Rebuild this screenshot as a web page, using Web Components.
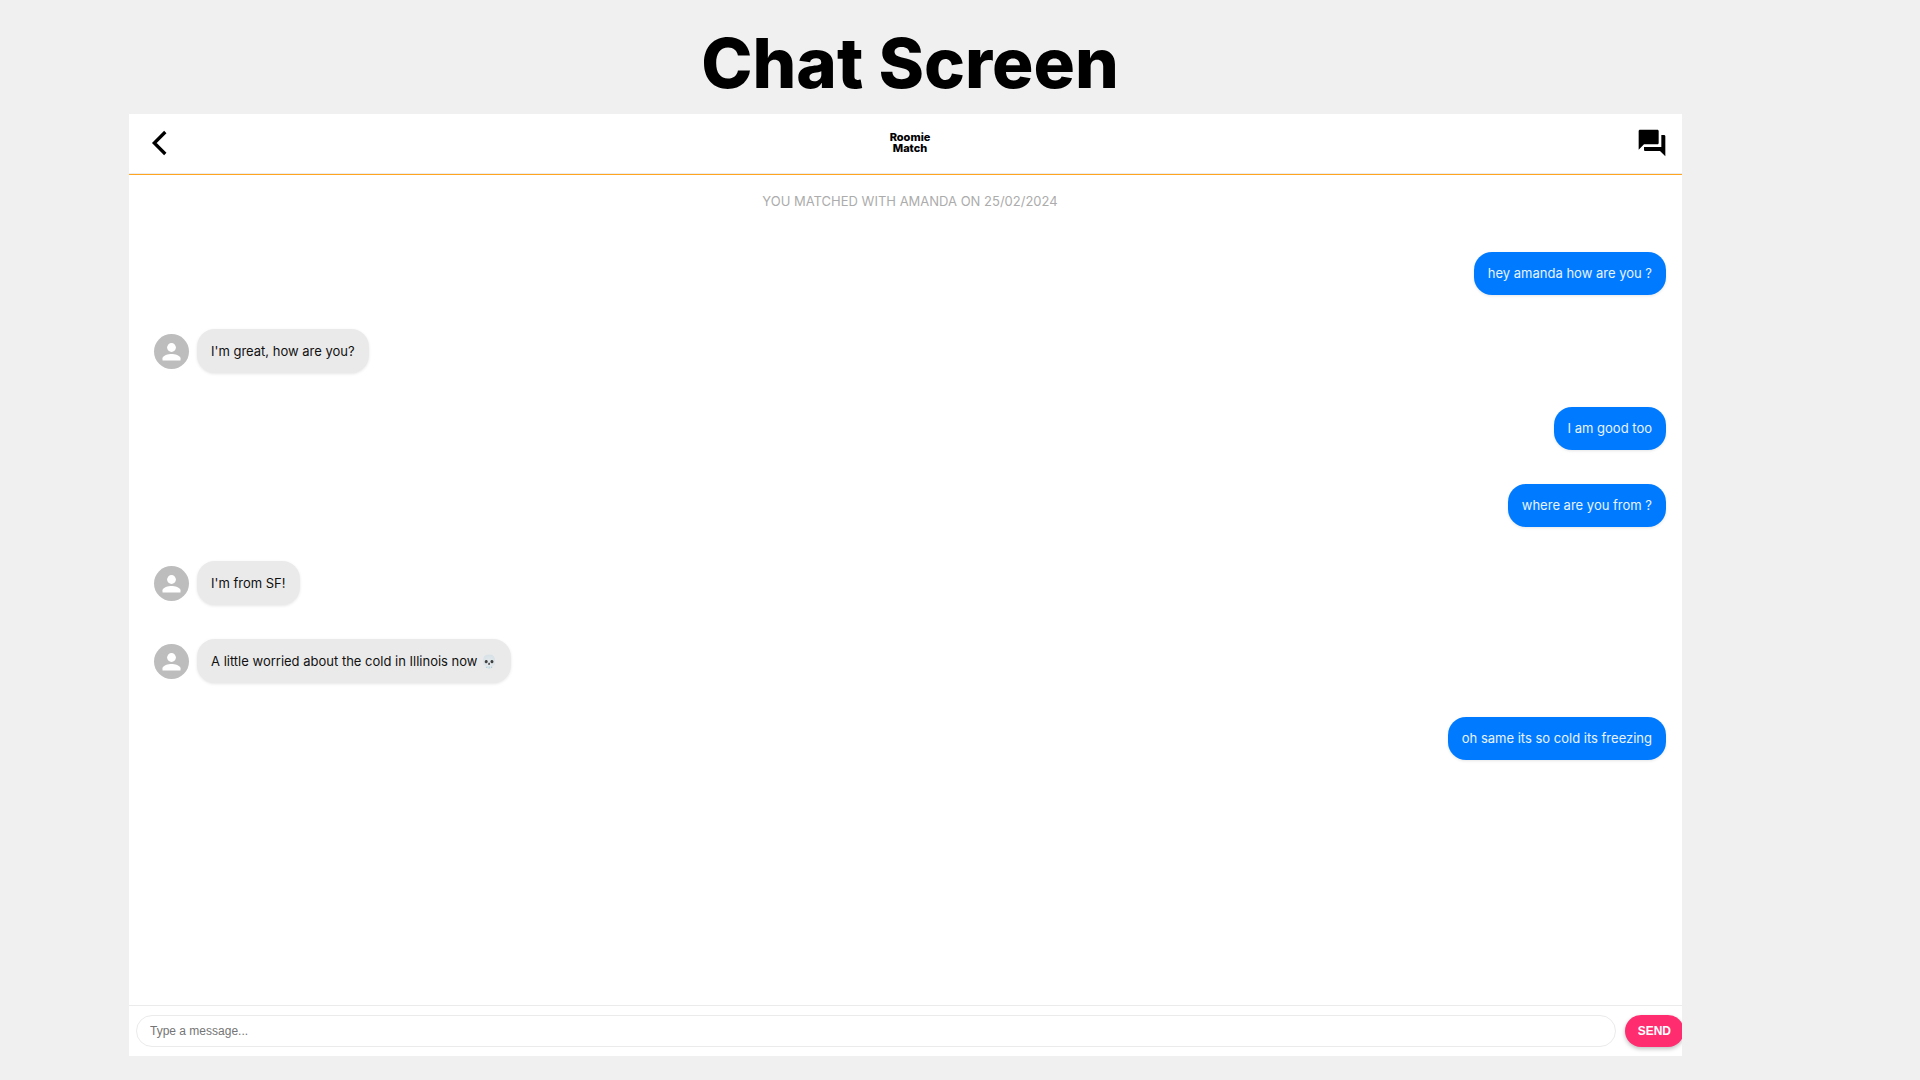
<!DOCTYPE html>
<html lang="en">
<head>
<meta charset="utf-8">
<meta name="viewport" content="width=device-width, initial-scale=1">
<title>Roomie Match</title>
<style>
  body {
    margin: 0;
    background: #f0f0f0;
    font-family: Inter, "Liberation Sans", sans-serif;
  }
</style>
</head>
<body>

<chat-page>
  <span slot="title">Chat Screen</span>
  <chat-header slot="header">Roomie<br>Match</chat-header>
  <chat-log slot="log">
    <span slot="notice">YOU MATCHED WITH AMANDA ON 25/02/2024</span>
    <chat-message sent>hey amanda how are you ?</chat-message>
    <chat-message>I'm great, how are you?</chat-message>
    <chat-message sent>I am good too</chat-message>
    <chat-message sent>where are you from ?</chat-message>
    <chat-message>I'm from SF!</chat-message>
    <chat-message>A little worried about the cold in Illinois now 💀</chat-message>
    <chat-message sent>oh same its so cold its freezing</chat-message>
  </chat-log>
  <chat-composer slot="composer" placeholder="Type a message..."></chat-composer>
</chat-page>

<script>
class ChatPage extends HTMLElement {
  constructor() {
    super();

    let shadowRoot = this.attachShadow({mode: 'open'});
    shadowRoot.innerHTML = `
      <style>

        :host {
          --bleed: 9px;
          display: flex;
          flex-direction: column;
          box-sizing: border-box;
          min-height: 100vh;
          padding: 23px 238px 24px 129px;
        }

        h1 {
          margin: 0 calc(-1 * var(--bleed)) 11px 0;
          font-size: 69px;
          font-weight: 800;
          line-height: 80px;
          text-align: center;
          color: #000;
        }

        /* the app is a little wider than its frame, which cuts it off */
        .frame {
          display: flex;
          flex: 1;
          overflow: hidden;
          background: #fff;
        }

        .app {
          display: flex;
          flex: 1;
          flex-direction: column;
          margin-right: calc(-1 * var(--bleed));
        }

        ::slotted(chat-log) {
          flex: 1;
        }

      </style>

      <h1><slot name="title"></slot></h1>
      <main class="frame">
        <div class="app">
          <slot name="header"></slot>
          <slot name="log"></slot>
          <slot name="composer"></slot>
        </div>
      </main>
    `;
  }
}

class ChatHeader extends HTMLElement {
  constructor() {
    super();

    let shadowRoot = this.attachShadow({mode: 'open'});
    shadowRoot.innerHTML = `
      <style>

        :host {
          display: block;
          border-bottom: 1px solid #ffa51f;
        }

        header {
          display: flex;
          align-items: center;
          justify-content: space-between;
          height: 57px;
          padding: 0 15px 2px;
          border-bottom: 1px solid #ececec;
        }

        button {
          display: flex;
          align-items: center;
          width: 40px;
          height: 32px;
          margin: 0;
          padding: 0;
          border: 0;
          background: none;
        }

        .name {
          font-size: 11px;
          font-weight: 800;
          line-height: 11px;
          text-align: center;
        }

      </style>

      <header>
        <button type="button" aria-label="Back">
          <svg width="32" height="32" viewBox="0 0 32 32" fill="none" stroke="#000" stroke-width="3.3">
            <path d="M21.3 5L10.3 16l11 11"/>
          </svg>
        </button>
        <div class="name"><slot></slot></div>
        <button type="button" aria-label="Chats">
          <svg width="32" height="32" viewBox="0 0 24 24">
            <path d="M21 6h-2v9H6v2c0 .55.45 1 1 1h11l4 4V7c0-.55-.45-1-1-1zm-4 6V3c0-.55-.45-1-1-1H3c-.55 0-1 .45-1 1v14l4-4h10c.55 0 1-.45 1-1z"/>
          </svg>
        </button>
      </header>
    `;
  }
}

class ChatLog extends HTMLElement {
  constructor() {
    super();

    let shadowRoot = this.attachShadow({mode: 'open'});
    shadowRoot.innerHTML = `
      <style>

        :host {
          display: block;
        }

        p {
          margin: 0;
          padding: 17px 0 42px;
          font-size: 13px;
          line-height: 18px;
          text-align: center;
          color: #acacac;
        }

        .messages {
          display: flex;
          flex-direction: column;
          gap: 34px;
          padding: 0 25px;
        }

      </style>

      <p><slot name="notice"></slot></p>
      <div class="messages"><slot></slot></div>
    `;
  }
}

class ChatMessage extends HTMLElement {
  constructor() {
    super();

    let shadowRoot = this.attachShadow({mode: 'open'});
    shadowRoot.innerHTML = `
      <style>

        :host {
          display: flex;
          align-items: center;
          gap: 8px;
        }

        :host([sent]) {
          justify-content: flex-end;
        }

        :host([sent]) svg {
          display: none;
        }

        svg {
          flex: none;
          border-radius: 50%;
          background: #bdbdbd;
        }

        .bubble {
          padding: 13px 14px;
          border-radius: 18px;
          background: #eaeaea;
          box-shadow: 0 1px 3px rgba(0, 0, 0, 0.1);
          font-size: 13px;
          line-height: 18px;
          color: #111;
        }

        :host([sent]) .bubble {
          background: #007bff;
          line-height: 17px;
          color: #e9f3ff;
        }

      </style>

      <svg width="35" height="35" viewBox="0 0 35 35" fill="#fff" aria-hidden="true">
        <circle cx="17.5" cy="13.5" r="4.4"/>
        <path d="M8.5 26.5v-2.2c0-3 6-4.400 9-4.400s9 1.400 9 4.400v2.200z"/>
      </svg>
      <div class="bubble"><slot></slot></div>
    `;
  }
}

class ChatComposer extends HTMLElement {
  // Monitor the 'placeholder' attribute for changes.
  static get observedAttributes() {
    return ['placeholder'];
  }

  constructor() {
    super();

    let shadowRoot = this.attachShadow({mode: 'open'});
    shadowRoot.innerHTML = `
      <style>

        :host {
          display: block;
          border-top: 1px solid #ebebeb;
          font-family: "Liberation Sans", Arial, sans-serif;
        }

        form {
          display: flex;
          align-items: center;
          gap: 9px;
          padding: 9px 7px;
        }

        input,
        button {
          box-sizing: border-box;
          height: 32px;
          margin: 0;
          border-radius: 16px;
          font-family: inherit;
          font-size: 12px;
        }

        input {
          flex: 1;
          min-width: 0;
          padding: 0 13px;
          border: 1px solid #ebebeb;
          background: #fff;
          outline: none;
        }

        input::placeholder {
          color: #757575;
        }

        button {
          padding: 0 13px;
          border: 0;
          background: #ff2d6f;
          box-shadow: 0 2px 4px rgba(0, 0, 0, 0.25);
          font-weight: bold;
          color: #fff;
        }

      </style>

      <form>
        <input type="text" aria-label="Message">
        <button type="button">SEND</button>
      </form>
    `;
  }

  // Respond to attribute changes.
  attributeChangedCallback(attr, oldValue, newValue) {
    this.shadowRoot.querySelector('input').setAttribute(attr, newValue || '');
  }
}

// Define the new elements
customElements.define('chat-page', ChatPage);
customElements.define('chat-header', ChatHeader);
customElements.define('chat-log', ChatLog);
customElements.define('chat-message', ChatMessage);
customElements.define('chat-composer', ChatComposer);
</script>
</body>
</html>
